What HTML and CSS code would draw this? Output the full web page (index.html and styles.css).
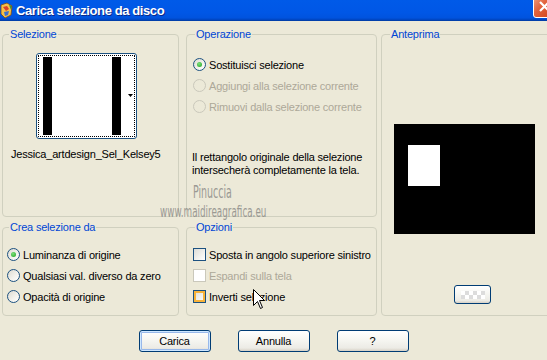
FILE: index.html
```html
<!DOCTYPE html>
<html lang="it">
<head>
    <meta charset="UTF-8">
    <title>Carica selezione da disco</title>
    <link rel="stylesheet" href="styles.css">
</head>
<body>
<div class="window">
    <div class="titlebar">
        <svg class="app-icon" width="14" height="17" viewBox="0 0 14 17">
            <path d="M1 3 L7 1 L12 4 L11 13 L5 16 L1 12 Z" fill="#f4c048"/>
            <path d="M3 5 L7 4 L9 7 L6 9 Z" fill="#d8402a"/>
            <path d="M4 10 L9 9 L8 13 L5 14 Z" fill="#3a6fd0"/>
            <path d="M9 3 L12 4 L11 8 Z" fill="#2e9a3c"/>
            <path d="M1 3 L7 1 L12 4 L11 13 L5 16 L1 12 Z" fill="none" stroke="#7a4a1a" stroke-width="0.8"/>
        </svg>
        <span class="title">Carica selezione da disco</span>
        <span class="close">
            <svg width="21" height="21" viewBox="0 0 21 21">
                <path d="M6 6 L15 15 M15 6 L6 15" stroke="#fff" stroke-width="2.2"/>
            </svg>
        </span>
    </div>

    <div class="client">
        <div class="groups">
            <fieldset class="group sel">
                <legend>Selezione</legend>
                <div class="thumb">
                    <svg width="99" height="84" viewBox="0 0 99 84">
                        <rect x="6" y="3" width="9" height="78" fill="#000"/>
                        <rect x="75" y="3" width="9" height="78" fill="#000"/>
                        <path d="M91 40 L96 40 L93.5 43 Z" fill="#000"/>
                    </svg>
                </div>
                <div class="thumb-name">Jessica_artdesign_Sel_Kelsey5</div>
            </fieldset>

            <fieldset class="group op">
                <legend>Operazione</legend>
                <div class="options">
                    <div class="opt"><span class="radio checked"></span>Sostituisci selezione</div>
                    <div class="opt disabled"><span class="radio"></span>Aggiungi alla selezione corrente</div>
                    <div class="opt disabled"><span class="radio"></span>Rimuovi dalla selezione corrente</div>
                </div>
                <p class="note">Il rettangolo originale della selezione<br>intersecherà completamente la tela.</p>
            </fieldset>

            <fieldset class="group preview">
                <legend>Anteprima</legend>
                <div class="canvas">
                    <div class="canvas-sel"></div>
                </div>
                <div class="xp-btn small"><span class="checker"></span></div>
            </fieldset>

            <fieldset class="group crea">
                <legend>Crea selezione da</legend>
                <div class="options">
                    <div class="opt"><span class="radio checked"></span>Luminanza di origine</div>
                    <div class="opt"><span class="radio"></span>Qualsiasi val. diverso da zero</div>
                    <div class="opt"><span class="radio"></span>Opacità di origine</div>
                </div>
            </fieldset>

            <fieldset class="group opz">
                <legend>Opzioni</legend>
                <div class="options">
                    <div class="opt"><span class="check"></span>Sposta in angolo superiore sinistro</div>
                    <div class="opt disabled"><span class="check"></span>Espandi sulla tela</div>
                    <div class="opt"><span class="check hover"></span>Inverti selezione</div>
                </div>
            </fieldset>
        </div>

        <div class="buttons">
            <div class="xp-btn default">Carica</div>
            <div class="xp-btn">Annulla</div>
            <div class="xp-btn">?</div>
        </div>
    </div>

    <div class="watermark">
        <div class="wm-name">Pinuccia</div>
        <div class="wm-site">www.maidireagrafica.eu</div>
    </div>

    <svg class="cursor" width="13" height="21" viewBox="0 0 13 21">
        <path d="M0.5 0.5 L0.5 16.5 L4.5 12.5 L7.5 19.5 L9.5 18.5 L6.5 11.5 L11.5 11.5 Z" fill="#fff" stroke="#000" stroke-width="1"/>
    </svg>
</div>
</body>
</html>
```

FILE: styles.css
```css
body {
    margin: 0;
    background: #ece9d8;
    font-family: "Liberation Sans", Arial, sans-serif;
    font-size: 11px;
    letter-spacing: -0.2px;
    color: #000;
    overflow: hidden;
}
.window {
    position: relative;
    width: 547px;
    height: 360px;
    overflow: hidden;
}

/* title bar */
.titlebar {
    height: 21px;
    display: flex;
    align-items: center;
    background: linear-gradient(to bottom, #005ae8 0%, #0057e6 60%, #0053de 85%, #0047c4 93%, #003a9e 100%);
    color: #fff;
}
.app-icon {
    margin: 0 2px 0 0;
    flex: none;
}
.title {
    flex: 1;
    font-weight: bold;
    font-size: 13px;
    letter-spacing: -0.4px;
    text-shadow: 1px 1px 0 #0a2a8a;
}
.close {
    align-self: flex-start;
    width: 21px;
    height: 21px;
    margin-top: -5px;
    margin-right: -9px;
    border: 1px solid #fff;
    border-radius: 3px;
    background: linear-gradient(135deg, #f0a080 0%, #e2643f 40%, #cf3f16 100%);
    flex: none;
}
.close svg {
    display: block;
}

/* client area */
.client {
    padding-top: 7px;
}
.groups {
    display: grid;
    grid-template-columns: 177px 7px 191px 4px 172px;
    grid-template-rows: 189px 95px;
    row-gap: 4px;
    margin-left: 2px;
}
.group {
    margin: 0;
    padding: 0;
    min-width: 0;
    border: 1px solid #d0d0bf;
    border-radius: 4px;
}
.group legend {
    color: #0046d5;
    line-height: 13px;
    padding: 0 1px;
    margin-left: 6px;
}
.sel { grid-column: 1; grid-row: 1; }
.op { grid-column: 3; grid-row: 1; }
.preview { grid-column: 5; grid-row: 1 / 3; }
.crea { grid-column: 1; grid-row: 2; }
.opz { grid-column: 3; grid-row: 2; }
.op legend,
.preview legend,
.opz legend {
    margin-left: 8px;
}

/* selezione */
.thumb {
    width: 99px;
    height: 84px;
    margin: 12px 0 0 33px;
    border: 1px solid #1c5180;
    border-radius: 3px;
    background: #fff;
    outline: 1px dotted #000;
    outline-offset: -3px;
}
.thumb svg {
    display: block;
}
.thumb-name {
    margin: 9px 0 0 8px;
    line-height: 13px;
}

/* radio / check lists */
.options {
    display: flex;
    flex-direction: column;
    gap: 8px;
    padding-left: 6px;
}
.op .options {
    margin-top: 17px;
}
.crea .options,
.opz .options {
    margin-top: 14px;
}
.crea .options {
    padding-left: 4px;
}
.opt {
    display: flex;
    align-items: center;
    height: 13px;
    gap: 3px;
    white-space: nowrap;
}
.opt.disabled {
    color: #aca899;
}
.radio {
    position: relative;
    width: 11px;
    height: 11px;
    border: 1px solid #1c5180;
    border-radius: 50%;
    background: linear-gradient(135deg, #dcdad1 0%, #f4f3ee 60%, #fff 100%);
    flex: none;
}
.radio.checked::after {
    content: "";
    position: absolute;
    left: 3px;
    top: 3px;
    width: 5px;
    height: 5px;
    border-radius: 50%;
    background: radial-gradient(circle at 40% 35%, #7be07b, #21a121);
}
.disabled .radio {
    border-color: #cac8bb;
    background: transparent;
}
.check {
    width: 11px;
    height: 11px;
    border: 1px solid #1c5180;
    background: linear-gradient(135deg, #dcdcd7 0%, #f2f2ee 60%, #fff 100%);
    flex: none;
}
.disabled .check {
    border-color: #cac8bb;
    background: #fff;
}
.check.hover {
    box-shadow: inset 0 0 0 2px #f8b33a;
}
.note {
    margin: 38px 0 0 5px;
    line-height: 13px;
}

/* anteprima */
.canvas {
    width: 141px;
    height: 110px;
    margin: 83px 0 0 12px;
    background: #000;
    padding: 21px 0 0 14px;
    box-sizing: border-box;
}
.canvas-sel {
    width: 32px;
    height: 41px;
    background: #fff;
}

/* buttons */
.xp-btn {
    display: flex;
    align-items: center;
    justify-content: center;
    box-sizing: border-box;
    width: 72px;
    height: 22px;
    border: 1px solid #003c74;
    border-radius: 3px;
    background: linear-gradient(to bottom, #fff 0%, #f7f7f3 40%, #ecebe5 85%, #d6d0c5 100%);
}
.xp-btn.default {
    box-shadow: inset 0 0 0 1px #cee7ff, inset 0 0 0 2px #98b8ea;
}
.xp-btn.small {
    width: 37px;
    height: 19px;
    margin: 51px 0 0 72px;
}
.checker {
    width: 24px;
    height: 8px;
    background: repeating-conic-gradient(#dcdcdc 0 25%, #fff 0 50%) 0 0 / 8px 8px;
}
.buttons {
    display: flex;
    justify-content: center;
    gap: 27px;
    margin-top: 14px;
}

/* watermark and cursor lie over the dialog */
.watermark {
    position: absolute;
    left: 150px;
    top: 181px;
    color: #8c8c88;
    font-family: "DejaVu Sans", sans-serif;
    letter-spacing: 0;
    opacity: 0.85;
    pointer-events: none;
}
.wm-name {
    font-size: 18px;
    line-height: 21px;
    margin-left: 43px;
    transform: scaleX(0.525);
    transform-origin: left;
}
.wm-site {
    font-size: 16px;
    line-height: 19px;
    margin-left: 10px;
    transform: scaleX(0.55);
    transform-origin: left;
}
.cursor {
    position: absolute;
    left: 253px;
    top: 289px;
}
```
